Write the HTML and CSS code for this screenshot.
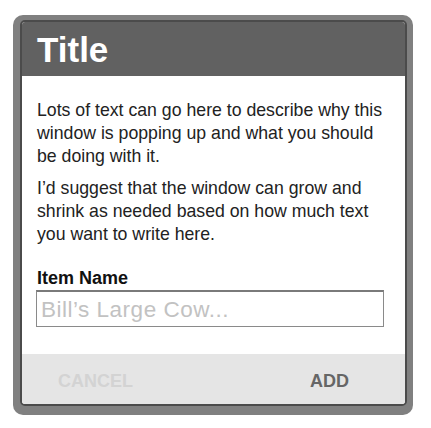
FILE: index.html
```html
<!DOCTYPE html>
<html>
<head>
<meta charset="utf-8">
<link rel="stylesheet" href="styles.css">
</head>
<body>
<div class="frame">
  <div class="dialog">
    <div class="header"><h1 class="title">Title</h1></div>
    <div class="content">
      <p class="text">Lots of text can go here to describe why this window is popping up and what you should be doing with it.</p>
      <p class="text second">I’d suggest that the window can grow and shrink as needed based on how much text you want to write here.</p>
      <label class="label" for="item">Item Name</label>
      <input class="input" id="item" type="text" placeholder="Bill’s Large Cow...">
    </div>
    <div class="footer">
      <button class="btn btn-cancel">CANCEL</button>
      <button class="btn btn-add">ADD</button>
    </div>
  </div>
</div>
</body>
</html>
```
FILE: styles.css
```css
html, body {
  margin: 0;
  padding: 0;
  background: #ffffff;
}
body {
  font-family: "Liberation Sans", Arial, sans-serif;
}
.frame {
  margin: 15px 0 0 13px;
  width: 387px;
  padding: 5px 6px 9px 7px;
  background: #808080;
  border-radius: 10px;
}
.dialog {
  border: 2px solid #4b4b4b;
  border-radius: 5px;
  overflow: hidden;
  background: #ffffff;
}
.header {
  background: #616161;
  height: 54px;
  padding-left: 15px;
}
.title {
  margin: 0;
  font-size: 35px;
  line-height: 56px;
  font-weight: bold;
  color: #ffffff;
}
.content {
  padding: 23px 15px 27px 15px;
}
.text {
  margin: 0;
  font-size: 17.7px;
  line-height: 23px;
  color: #222222;
}
.second {
  margin-top: 9px;
}
.label {
  display: block;
  margin-top: 21px;
  font-size: 18px;
  line-height: 23px;
  font-weight: bold;
  color: #111111;
}
.input {
  display: block;
  box-sizing: border-box;
  width: 348px;
  height: 37px;
  margin: 0 0 0 -1px;
  padding: 2px 4px 0 4px;
  border: 1px solid #8a8a8a;
  border-top: 2px solid #7a7a7a;
  font-family: "Liberation Sans", Arial, sans-serif;
  font-size: 22.5px;
  letter-spacing: 0.5px;
  color: #333333;
  background: #ffffff;
  outline: none;
}
.input::placeholder {
  color: #c2c2c2;
}
.footer {
  display: flex;
  justify-content: space-between;
  align-items: center;
  height: 50px;
  padding: 0 56px 0 36px;
  background: #e5e5e5;
}
.btn {
  margin: 0;
  padding: 0;
  border: none;
  background: none;
  font-family: "Liberation Sans", Arial, sans-serif;
  font-size: 18px;
  font-weight: bold;
  line-height: 23px;
  padding-top: 4px;
}
.btn-cancel {
  color: #d3d3d3;
}
.btn-add {
  color: #666666;
}
```
